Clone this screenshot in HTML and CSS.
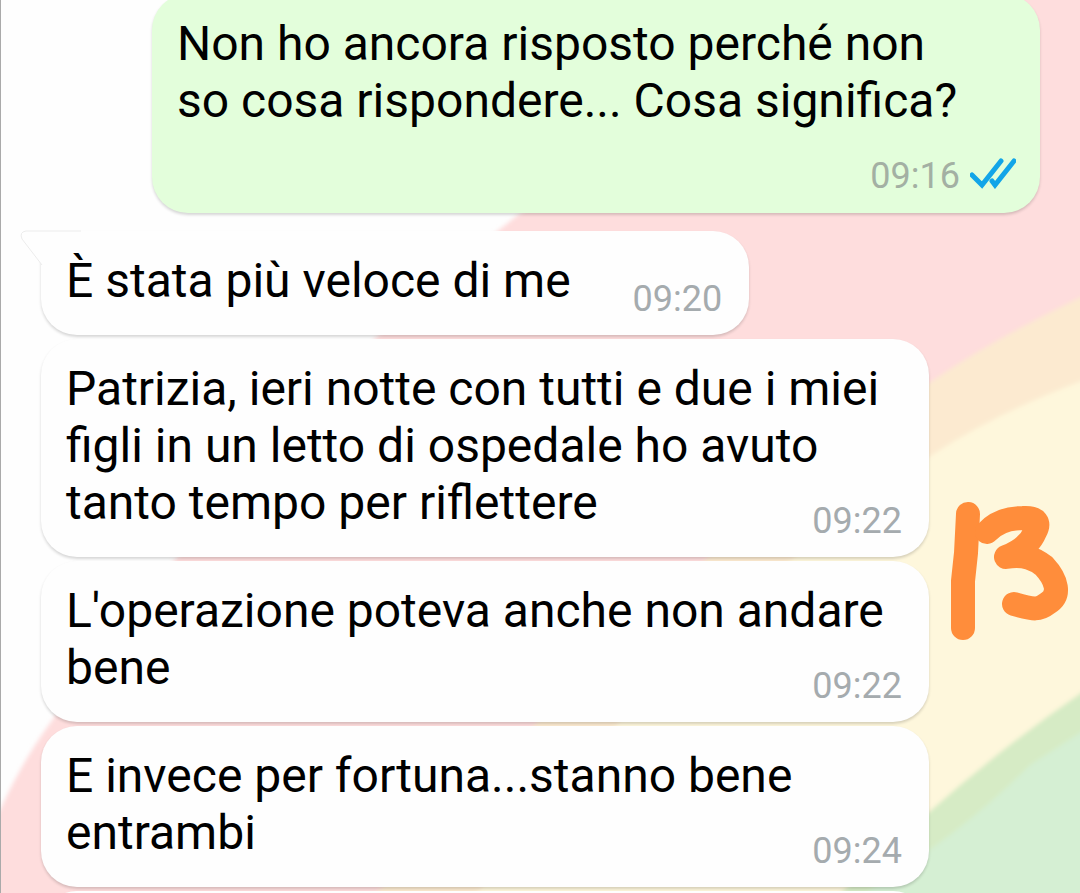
FILE: index.html
```html
<!DOCTYPE html>
<html lang="it">

<head>
    <meta charset="UTF-8">
    <meta name="viewport" content="width=device-width, initial-scale=1.0">
    <title>Chat</title>
    <link rel="stylesheet" href="styles.css">
</head>

<body>

    <!-- Rainbow wallpaper -->
    <svg class="wallpaper" viewBox="0 0 1080 893" preserveAspectRatio="none" aria-hidden="true">
        <defs>
            <filter id="soften">
                <feGaussianBlur stdDeviation="2" />
            </filter>
        </defs>
        <g filter="url(#soften)">
            <path fill="#fedddd" d="M-20 840 L0 808 Q22 760 50 722 Q110 630 175 559 Q270 440 376 337 Q440 274 520 213 Q780 30 1100 -100 V920 H-20Z" />
            <path fill="#fcead0" d="M340 920 L380 889 Q460 800 535 724 Q620 635 706 559 Q800 470 935 379 Q1000 335 1100 288 V920Z" />
            <path fill="#fef7dc" d="M450 920 L480 889 Q545 805 617 724 Q700 635 792 559 Q860 500 935 453 Q1000 410 1100 374 V920Z" />
            <path fill="#d6ebc5" d="M810 920 L845 889 L929 812 Q1010 740 1100 680 V920Z" />
            <path fill="#d5efd3" d="M840 920 L875 885 Q960 835 1030 765 L1100 720 V920Z" />
        </g>
    </svg>

    <main class="chat">
        <article class="message outgoing">
            <p>Non ho ancora risposto perché non<br>so cosa rispondere... Cosa significa?</p>
            <div class="meta">
                <time datetime="09:16">09:16</time>
                <svg class="checks" viewBox="0 0 46 32" role="img" aria-label="Letto">
                    <path d="M2 18 L12 28 L31 4 M22 24 L25 28 L44 4" />
                </svg>
            </div>
        </article>

        <article class="message incoming short first">
            <svg class="tail" viewBox="0 0 24 36" aria-hidden="true">
                <path class="tail-fill" d="M24 0 H5 Q-2 1 1 8 L21 34 H24Z" />
                <path class="tail-line" d="M60 0 H5 Q-2 1 1 8 L21 34" />
            </svg>
            <p>È stata più veloce di me</p>
            <time datetime="09:20">09:20</time>
        </article>

        <article class="message incoming">
            <p>Patrizia, ieri notte con tutti e due i miei<br>figli in un letto di ospedale ho avuto<br>tanto tempo per riflettere</p>
            <time datetime="09:22">09:22</time>
        </article>

        <article class="message incoming">
            <p>L'operazione poteva anche non andare<br>bene</p>
            <time datetime="09:22">09:22</time>
        </article>

        <article class="message incoming">
            <p>E invece per fortuna...stanno bene<br>entrambi</p>
            <time datetime="09:24">09:24</time>
        </article>

        <div class="message incoming next"></div>
    </main>

    <!-- Handwritten page number -->
    <svg class="scribble" viewBox="0 0 120 140" role="img" aria-label="13">
        <path d="M19 13 L17 52 L14 80 V127" />
        <path d="M38 31 C48 20 62 17 74 17 C88 16 91 22 86 31 C81 43 70 51 57 56 C76 53 86 58 95 65 C108 79 112 94 99 102 C90 109 86 109 65 103" />
    </svg>

</body>

</html>
```

FILE: styles.css
```css
* {
    margin: 0;
    padding: 0;
    box-sizing: border-box;
}

body {
    position: relative;
    min-height: 100vh;
    background-color: #fefefe;
    border-left: 1px solid #aaa;
    font-family: Roboto, "Liberation Sans", sans-serif;
    color: #000;
}

.wallpaper {
    position: absolute;
    top: 0;
    left: 0;
    width: 100%;
    height: 100%;
}

/* The thread is scrolled a little, so the first bubble is cut at the top */
.chat {
    position: relative;
    display: flex;
    flex-direction: column;
    gap: 4px;
    height: 100vh;
    overflow: hidden;
    padding: 0 40px;
}

.message {
    display: grid;
    flex-shrink: 0;
    padding: 21px 27px 26px 25px;
    border-radius: 36px;
    background-color: #fefefe;
    box-shadow: 0 2px 3px rgba(0, 0, 0, 0.16);
}

.message p {
    grid-area: 1 / 1;
    font-size: 48px;
    line-height: 57px;
    white-space: nowrap;
}

.message time {
    font-size: 36px;
    line-height: 42px;
    color: #a5abae;
}

.outgoing {
    margin-top: -6px;
    margin-left: 111px;
    padding-right: 24px;
    padding-bottom: 16px;
    background-color: #e3fedb;
}

.meta {
    display: flex;
    justify-content: flex-end;
    align-items: center;
    gap: 10px;
    margin-top: 26px;
}

.outgoing .meta time {
    color: #a3b0a3;
}

.checks {
    width: 46px;
    height: 32px;
    margin-bottom: 6px;
    fill: none;
    stroke: #12a5e8;
    stroke-width: 5;
    stroke-linecap: round;
}

.incoming {
    margin-right: 111px;
}

.incoming time {
    grid-area: 1 / 1;
    align-self: end;
    justify-self: end;
    margin-bottom: -11px;
}

.short {
    display: flex;
    align-self: flex-start;
    gap: 62px;
    margin-right: 0;
}

.first {
    position: relative;
    margin-top: 14px;
    border-top-left-radius: 0;
}

.tail {
    position: absolute;
    top: 0;
    left: -20px;
    width: 24px;
    height: 36px;
    overflow: visible;
}

.tail-fill {
    fill: #fefefe;
}

.tail-line {
    fill: none;
    stroke: #ececec;
    stroke-width: 1;
}

.next {
    height: 80px;
}

.scribble {
    position: absolute;
    top: 501px;
    right: 11px;
    width: 120px;
    height: 140px;
    fill: none;
    stroke: #ff8d3b;
    stroke-width: 24;
    stroke-linecap: round;
    stroke-linejoin: round;
}
```
